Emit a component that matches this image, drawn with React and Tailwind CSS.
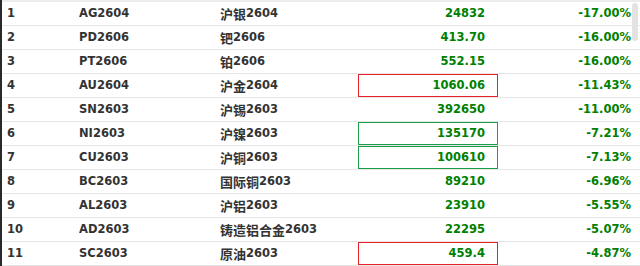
import React from "react";

const rows = [
  ["1", "AG2604", "沪银", "2604", "24832", "-17.00%", null],
  ["2", "PD2606", "钯", "2606", "413.70", "-16.00%", null],
  ["3", "PT2606", "铂", "2606", "552.15", "-16.00%", null],
  ["4", "AU2604", "沪金", "2604", "1060.06", "-11.43%", "red"],
  ["5", "SN2603", "沪锡", "2603", "392650", "-11.00%", null],
  ["6", "NI2603", "沪镍", "2603", "135170", "-7.21%", "green"],
  ["7", "CU2603", "沪铜", "2603", "100610", "-7.13%", "green"],
  ["8", "BC2603", "国际铜", "2603", "89210", "-6.96%", null],
  ["9", "AL2603", "沪铝", "2603", "23910", "-5.55%", null],
  ["10", "AD2603", "铸造铝合金", "2603", "22295", "-5.07%", null],
  ["11", "SC2603", "原油", "2603", "459.4", "-4.87%", "red"],
];

export default function App() {
  return (
    <div
      className="relative w-[640px] h-[266px] overflow-hidden bg-white border-l-2 border-l-[#2a2a2a] text-[11.5px] font-bold text-[#333]"
      style={{ fontFamily: '"DejaVu Sans", "Noto Sans CJK SC", sans-serif' }}
    >
      <div className="h-[2px] bg-[#ececec]" />
      {rows.map((r) => (
        <div key={r[0]} className="flex h-[24px] border-b border-[#e6e6e6] items-stretch">
          <div className="w-[70px] pl-[5px] flex items-center">{r[0]}</div>
          <div className="w-[141px] pl-[7px] flex items-center">{r[1]}</div>
          <div className="w-[145px] pl-[7px] flex items-center">
            <span
              className="text-[13px]"
              style={{ fontFamily: '"Noto Sans CJK SC", sans-serif' }}
            >
              {r[2]}
            </span>
            <span>{r[3]}</span>
          </div>
          <div
            className={
              "w-[140px] pr-[12px] flex items-center justify-end text-[#008000] border " +
              (r[6] === "red"
                ? "border-[#e8202a]"
                : r[6] === "green"
                ? "border-[#1a9e4a]"
                : "border-transparent")
            }
          >
            {r[4]}
          </div>
          <div className="w-[134px] pr-[1px] flex items-center justify-end text-[#008000]">{r[5]}</div>
        </div>
      ))}
      <div className="absolute right-[2px] top-[3px] w-[6px] h-[38px] rounded-full bg-[#e3e3e3]" />
    </div>
  );
}
